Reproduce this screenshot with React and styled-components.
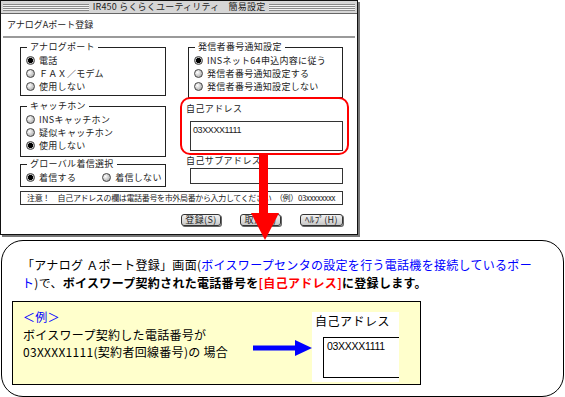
import React from "react";
import styled, { createGlobalStyle } from "styled-components";

const GlobalStyle = createGlobalStyle`
  body {
    margin: 0;
    background: #fff;
    font-family: "Noto Sans CJK JP", sans-serif;
  }
`;

const Page = styled.div`
  position: relative;
  width: 565px;
  height: 397px;
  overflow: hidden;
`;

const Window = styled.div`
  position: relative;
  box-sizing: border-box;
  width: 358px;
  height: 235px;
  border: 1px solid #111;
  box-shadow: 2px 2px 0 #777;
  background: #fff;
  color: #222;
  font-size: 9px;
  display: flex;
  flex-direction: column;
`;

const TitleBar = styled.div`
  height: 12px;
  background: #d6d6d6;
  border-bottom: 1px solid #666;
  display: flex;
  align-items: center;
  gap: 4px;
  padding: 0 2px;
`;

const Stripes = styled.div`
  flex: 1;
  height: 7px;
  background: repeating-linear-gradient(to bottom, #8a8a8a 0 1px, #f4f4f4 1px 2px);
`;

const Title = styled.div`
  line-height: 12px;
  letter-spacing: 0.2px;
  white-space: nowrap;
`;

const Heading = styled.div`
  height: 22px;
  line-height: 22px;
  padding-left: 6px;
`;

const Separator = styled.div`
  height: 2px;
  margin: 0 2px;
  background: #9a9a9a;
`;

const Main = styled.div`
  padding: 3px 14px 0 19px;
  display: flex;
  flex-direction: column;
`;

const Columns = styled.div`
  display: grid;
  grid-template-columns: 146px 155px;
  column-gap: 22px;
  align-items: start;
`;

const Column = styled.div`
  display: flex;
  flex-direction: column;
`;

const Group = styled.fieldset`
  margin: ${(p) => p.$top || 0}px 0 0;
  padding: 1px 0 ${(p) => p.$bottom || 2}px 5px;
  border: 1px solid #222;
  min-width: 0;
  display: flex;
  flex-direction: ${(p) => (p.$row ? "row" : "column")};
  gap: ${(p) => (p.$row ? "26px" : "0")};
`;

const Legend = styled.legend`
  padding: 0 3px;
  margin-left: 1px;
  line-height: 12px;
  letter-spacing: 0.3px;
`;

const Option = styled.div`
  height: 13px;
  display: flex;
  align-items: center;
  gap: 4px;
  white-space: nowrap;
  letter-spacing: 0.3px;
`;

const RadioDot = styled.span`
  box-sizing: border-box;
  width: 9px;
  height: 9px;
  border-radius: 50%;
  border: 1px solid #444;
  background: ${(p) =>
    p.$checked
      ? "radial-gradient(circle, #000 0 2.4px, #bbb 2.6px)"
      : "radial-gradient(circle at 35% 35%, #fff, #9a9a9a)"};
  flex: none;
`;

const FieldLabel = styled.div`
  margin: ${(p) => p.$top}px 0 0 -2px;
  line-height: 12px;
  letter-spacing: 0.4px;
`;

const Field = styled.div`
  box-sizing: border-box;
  margin-top: ${(p) => p.$top}px;
  margin-left: 2px;
  height: ${(p) => p.$h}px;
  border: 1px solid #333;
  padding: 3px 2px;
  font-family: "Liberation Sans", sans-serif;
  font-size: 9px;
  line-height: 10px;
  letter-spacing: -0.4px;
`;

const Notice = styled.div`
  box-sizing: border-box;
  margin-top: 4px;
  height: 14px;
  border: 1px solid #333;
  padding-left: 6px;
  font-size: 8px;
  line-height: 12px;
  white-space: nowrap;
  letter-spacing: -0.35px;
`;

const Buttons = styled.div`
  margin-top: 9px;
  display: flex;
  justify-content: flex-end;
  gap: 19px;
`;

const Button = styled.div`
  box-sizing: border-box;
  width: ${(p) => p.$w}px;
  height: 12px;
  border: 1px solid #333;
  border-radius: 3px;
  background: linear-gradient(#f2f2f2, #c8c8c8);
  box-shadow: 1px 1px 0 #666;
  font-size: 9px;
  line-height: 10px;
  text-align: center;
  letter-spacing: 0.4px;
`;

const Highlight = styled.div`
  position: absolute;
  left: 179px;
  top: 96px;
  width: 169px;
  height: 58px;
  box-sizing: border-box;
  border: 2px solid #f00;
  border-radius: 10px;
`;

const DownArrow = styled.svg`
  position: absolute;
  left: 250px;
  top: 154px;
`;

const Callout = styled.div`
  box-sizing: border-box;
  margin: 5px 0 0 1px;
  width: 563px;
  height: 157px;
  border: 1px solid #000;
  border-radius: 22px;
  padding: 15px 0 0 10px;
  font-size: 12px;
  color: #000;
`;

const Lead = styled.div`
  margin-left: 10px;
  line-height: 18px;
  letter-spacing: 0.3px;
  white-space: nowrap;
`;

const Ink = styled.span`
  color: ${(p) => p.$c || "#000"};
  font-weight: ${(p) => (p.$b ? 700 : 400)};
`;

const Example = styled.div`
  box-sizing: border-box;
  margin-top: 9px;
  width: 409px;
  height: 84px;
  border: 1px solid #000;
  background: #ffffcc;
  display: flex;
  align-items: flex-start;
`;

const ExampleText = styled.div`
  width: 240px;
  padding: 6px 0 0 10px;
  box-sizing: border-box;
  line-height: 17.5px;
  letter-spacing: 0.3px;
  white-space: nowrap;
`;

const Shot = styled.div`
  margin-top: 10px;
  width: 87px;
  height: 70px;
  background: #fff;
  overflow: hidden;
  padding: 2px 0 0 3px;
  box-sizing: border-box;
`;

const ShotLabel = styled.div`
  line-height: 14px;
  letter-spacing: 0.5px;
`;

const ShotField = styled.div`
  box-sizing: border-box;
  margin: 9px 0 0 8px;
  width: 100px;
  height: 41px;
  border: 1px solid #000;
  padding: 2px 3px;
  font-family: "Liberation Sans", sans-serif;
  font-size: 10.5px;
  line-height: 13px;
  letter-spacing: -0.3px;
`;

const Radio = ({ checked, children }) => (
  <Option>
    <RadioDot $checked={checked} />
    {children}
  </Option>
);

export default function App() {
  return (
    <Page>
      <GlobalStyle />
      <Window>
        <TitleBar>
          <Stripes />
          <Title>IR450 らくらくユーティリティ　簡易設定</Title>
          <Stripes />
        </TitleBar>
        <Heading>アナログAポート登録</Heading>
        <Separator />
        <Main>
          <Columns>
            <Column>
              <Group>
                <Legend>アナログポート</Legend>
                <Radio checked>電話</Radio>
                <Radio>ＦＡＸ／モデム</Radio>
                <Radio>使用しない</Radio>
              </Group>
              <Group $top={4} $bottom={4}>
                <Legend>キャッチホン</Legend>
                <Radio>INSキャッチホン</Radio>
                <Radio>疑似キャッチホン</Radio>
                <Radio checked>使用しない</Radio>
              </Group>
              <Group $top={1} $row>
                <Legend>グローバル着信選択</Legend>
                <Radio checked>着信する</Radio>
                <Radio>着信しない</Radio>
              </Group>
            </Column>
            <Column>
              <Group $bottom={4}>
                <Legend>発信者番号通知設定</Legend>
                <Radio checked>INSネット64申込内容に従う</Radio>
                <Radio>発信者番号通知設定する</Radio>
                <Radio>発信者番号通知設定しない</Radio>
              </Group>
              <FieldLabel $top={5}>自己アドレス</FieldLabel>
              <Field $top={6} $h={30}>03XXXX1111</Field>
              <FieldLabel $top={4}>自己サブアドレス</FieldLabel>
              <Field $top={1} $h={16} />
            </Column>
          </Columns>
          <Notice>
            注意！　自己アドレスの欄は電話番号を市外局番から入力してください　（例）03xxxxxxxx
          </Notice>
          <Buttons>
            <Button $w={40}>登録(S)</Button>
            <Button $w={41}>取消(C)</Button>
            <Button $w={43}>ﾍﾙﾌﾟ(H)</Button>
          </Buttons>
        </Main>
        <Highlight />
      </Window>

      <DownArrow width="30" height="87" viewBox="0 0 30 87">
        <rect x="9" y="0" width="9" height="60" fill="#f00" />
        <polygon points="1,59 29,59 15,86" fill="#f00" />
      </DownArrow>

      <Callout>
        <Lead>
          「アナログ Ａポート登録」画面(
          <Ink $c="#0000ff">ボイスワープセンタの設定を行う電話機を接続しているポー</Ink>
          <br />
          <Ink $c="#0000ff">ト</Ink>)で、
          <Ink $b>ボイスワープ契約された電話番号を</Ink>
          <Ink $b $c="#ff0000">[自己アドレス]</Ink>
          <Ink $b>に登録します。</Ink>
        </Lead>
        <Example>
          <ExampleText>
            <Ink $c="#0000ff">＜例＞</Ink>
            <br />
            ボイスワープ契約した電話番号が
            <br />
            03XXXX1111(契約者回線番号)の 場合
          </ExampleText>
          <svg width="59" height="18" viewBox="0 0 59 18" style={{ marginTop: 37, flex: "none" }}>
            <rect x="0" y="6.5" width="44" height="5" fill="#0000ff" />
            <polygon points="42,1 59,9 42,17" fill="#0000ff" />
          </svg>
          <Shot>
            <ShotLabel>自己アドレス</ShotLabel>
            <ShotField>03XXXX1111</ShotField>
          </Shot>
        </Example>
      </Callout>
    </Page>
  );
}
